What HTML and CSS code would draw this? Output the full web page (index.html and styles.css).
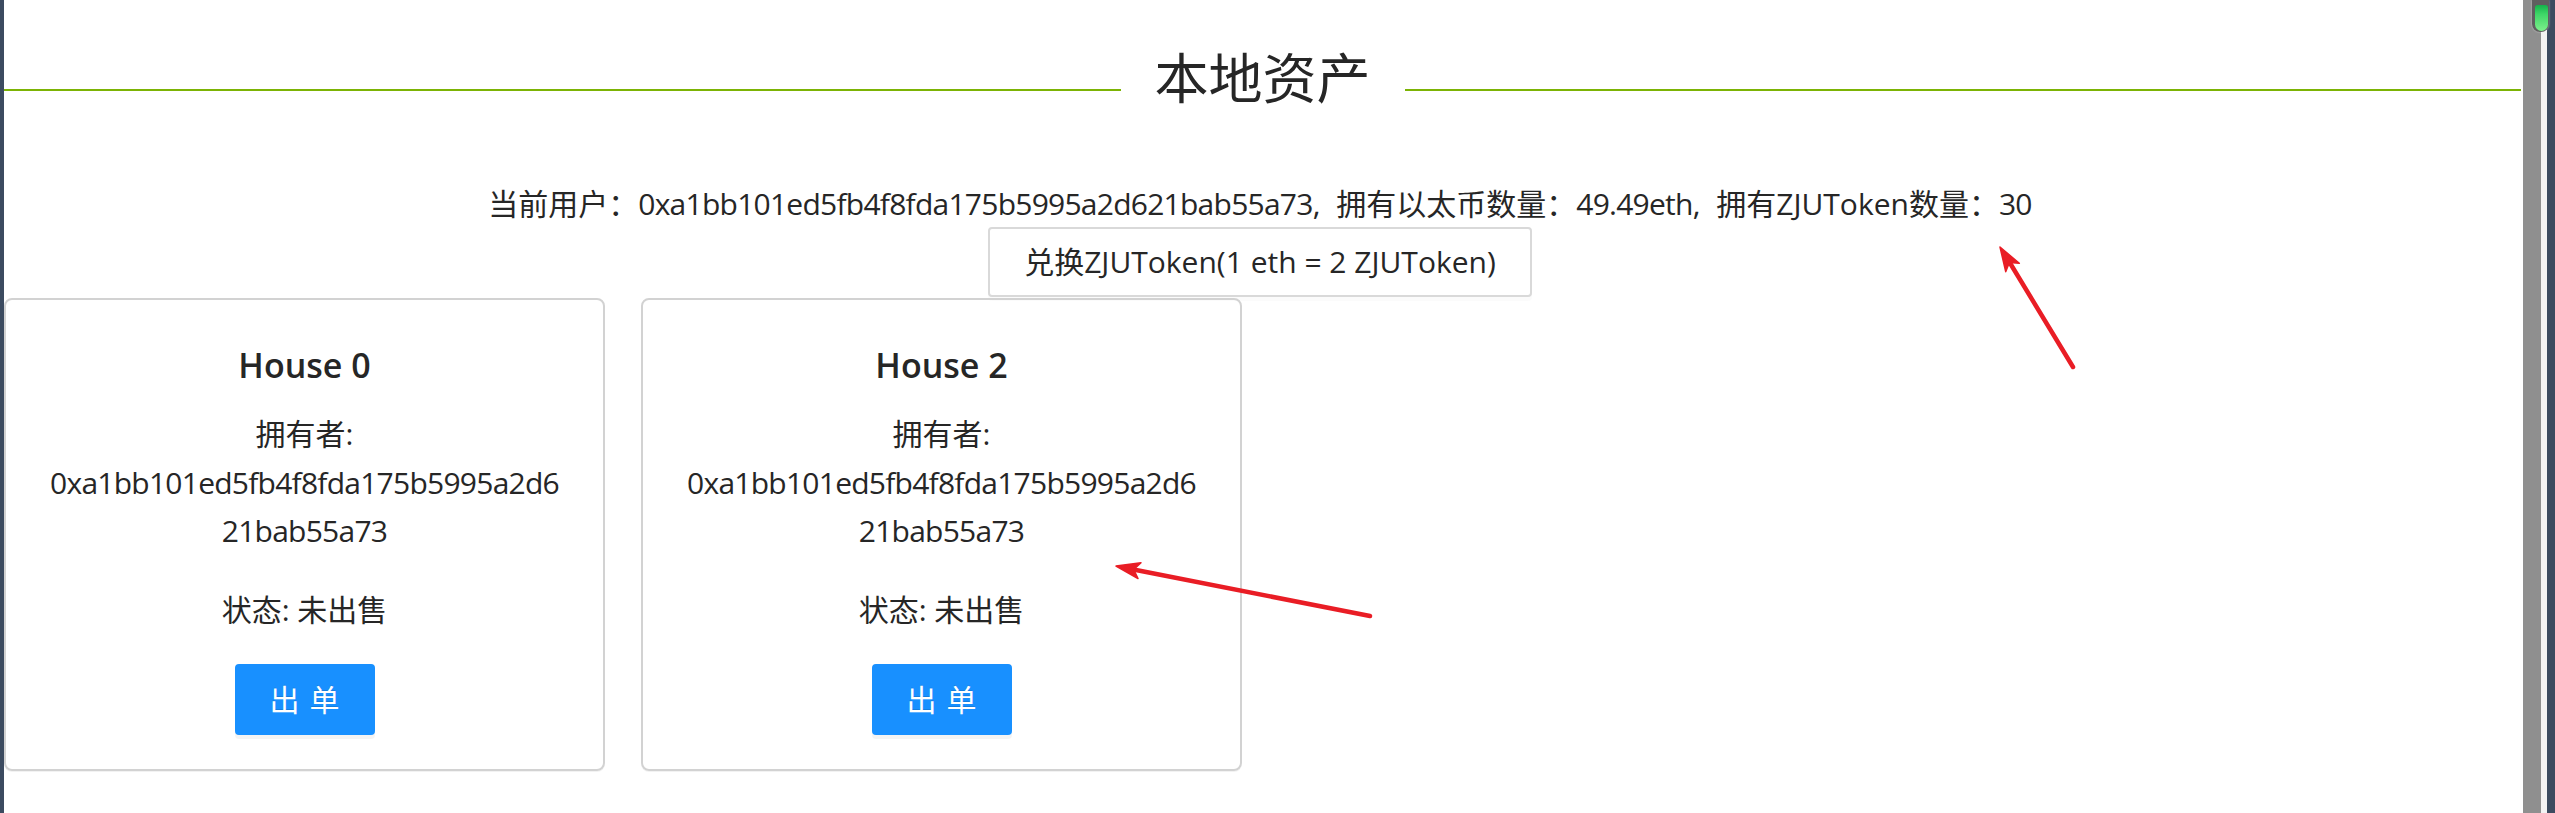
FILE: index.html
```html
<!DOCTYPE html>
<html lang="zh-CN">
<head>
<meta charset="utf-8">
<title>本地资产</title>
<link rel="stylesheet" href="styles.css">
</head>
<body>
<div class="frame">
  <div class="frame-left"></div>
  <main class="page">
    <div class="divider">
      <span class="divider-line"></span>
      <h1 class="divider-title">本地资产</h1>
      <span class="divider-line"></span>
    </div>
    <p class="account">当前用户：<span class="hex">0xa1bb101ed5fb4f8fda175b5995a2d621bab55a73</span>, 拥有以太币数量：<span class="hex">49.49eth</span>, 拥有ZJUToken数量：<span class="hex">30</span></p>
    <div class="exchange">
      <button class="btn" type="button">兑换ZJUToken(1 eth = 2 ZJUToken)</button>
    </div>
    <div class="cards">
      <div class="card">
        <h3 class="card-title">House 0</h3>
        <p>拥有者: <span class="hex">0xa1bb101ed5fb4f8fda175b5995a2d621bab55a73</span></p>
        <p>状态: 未出售</p>
        <button class="btn btn-primary" type="button"><span>出单</span></button>
      </div>
      <div class="card">
        <h3 class="card-title">House 2</h3>
        <p>拥有者: <span class="hex">0xa1bb101ed5fb4f8fda175b5995a2d621bab55a73</span></p>
        <p>状态: 未出售</p>
        <button class="btn btn-primary" type="button"><span>出单</span></button>
      </div>
    </div>
  </main>
  <div class="scrollbar">
    <div class="scroll-track"></div>
    <div class="scroll-edge"></div>
    <div class="scroll-frame"></div>
    <div class="scroll-thumb"><div class="scroll-glow"></div></div>
  </div>
</div>
<svg class="annotations" width="2555" height="813" viewBox="0 0 2555 813">
  <g stroke="#e91d25" stroke-width="4.5" stroke-linecap="round" stroke-linejoin="round" fill="#e91d25">
    <line x1="2073" y1="367" x2="2010" y2="263"/>
    <polygon points="2000,247 2019.3,263.3 2009.4,262.4 2005.7,271.7" stroke-width="1.5"/>
    <line x1="1370" y1="616" x2="1136" y2="570"/>
    <polygon points="1116,566 1141,562.8 1133.7,569.5 1138,578.5" stroke-width="1.5"/>
  </g>
</svg>
</body>
</html>
```

FILE: styles.css
```css
* {
  box-sizing: border-box;
}

html,
body {
  margin: 0;
  padding: 0;
}

body {
  position: relative;
  width: 2555px;
  height: 813px;
  overflow: hidden;
  background: #ffffff;
  color: #262626;
  font-family: "Open Sans", "Noto Sans CJK SC", sans-serif;
  font-size: 30px;
}

.frame {
  display: flex;
  height: 813px;
}

.frame-left {
  flex: none;
  width: 4px;
  background: #3c4b60;
}

.page {
  flex: 1;
  min-width: 0;
  padding-right: 2px;
}

/* divider with title */
.divider {
  display: flex;
  align-items: center;
  margin-top: 38px;
}

.divider-line {
  flex: 1;
  height: 2px;
  margin-top: 24px;
  background: #7cb305;
}

.divider-title {
  margin: 0;
  padding: 0 34px;
  font-size: 54px;
  font-weight: 400;
  line-height: 80px;
  color: #262626;
}

.account {
  margin: 62px 5px 0 0;
  line-height: 47px;
  text-align: center;
  word-spacing: 8px;
}

.hex {
  letter-spacing: -0.75px;
}

.exchange {
  display: flex;
  justify-content: center;
  margin: 0 5px 1px 0;
}

/* buttons */
.btn {
  display: inline-flex;
  align-items: center;
  justify-content: center;
  height: 70px;
  padding: 0 34px;
  border: 2px solid #d9d9d9;
  border-radius: 4px;
  background: #ffffff;
  color: #262626;
  font-family: inherit;
  font-size: 30px;
  line-height: 1;
  box-shadow: 0 4px 0 rgba(0, 0, 0, 0.015);
  cursor: pointer;
}

.btn-primary {
  width: 140px;
  height: 71px;
  padding: 0;
  border-color: #1890ff;
  background: #1890ff;
  color: #ffffff;
  box-shadow: 0 4px 0 rgba(0, 0, 0, 0.045);
  text-shadow: 0 -1px 0 rgba(0, 0, 0, 0.12);
}

.btn-primary span {
  letter-spacing: 0.34em;
  margin-right: -0.34em;
}

/* cards */
.cards {
  display: flex;
  align-items: flex-start;
  gap: 36px;
}

.card {
  width: 601px;
  padding: 36px 38px 34px;
  border: 2px solid #d2d2d2;
  border-radius: 8px;
  box-shadow: 0 1px 0 rgba(0, 0, 0, 0.05);
  text-align: center;
}

.card-title {
  margin: 0 0 16px;
  font-size: 34px;
  font-weight: 600;
  line-height: 58px;
  color: #262626;
}

.card p {
  margin: 0 0 30px;
  line-height: 48.5px;
  overflow-wrap: anywhere;
}

/* right window scrollbar */
.scrollbar {
  position: relative;
  flex: none;
  display: flex;
  width: 32px;
}

.scroll-track {
  width: 18px;
  background: #8f8f8f;
}

.scroll-edge {
  width: 6px;
  background: #f3f3f3;
}

.scroll-frame {
  width: 8px;
  background: #3c4b60;
}

.scroll-thumb {
  position: absolute;
  top: 0;
  left: 9px;
  width: 17px;
  height: 32px;
  padding: 5px 1px 1px 3px;
  border-radius: 0 0 8px 8px;
  background: #5f5f5f;
  box-shadow: 0 0 2px rgba(255, 255, 255, 0.6);
}

.scroll-glow {
  width: 100%;
  height: 100%;
  border-radius: 3px 3px 7px 7px;
  background: linear-gradient(#14b24a 0%, #3ed667 35%, #7df08c 100%);
}

/* screenshot annotations */
.annotations {
  position: absolute;
  top: 0;
  left: 0;
  pointer-events: none;
}
```
